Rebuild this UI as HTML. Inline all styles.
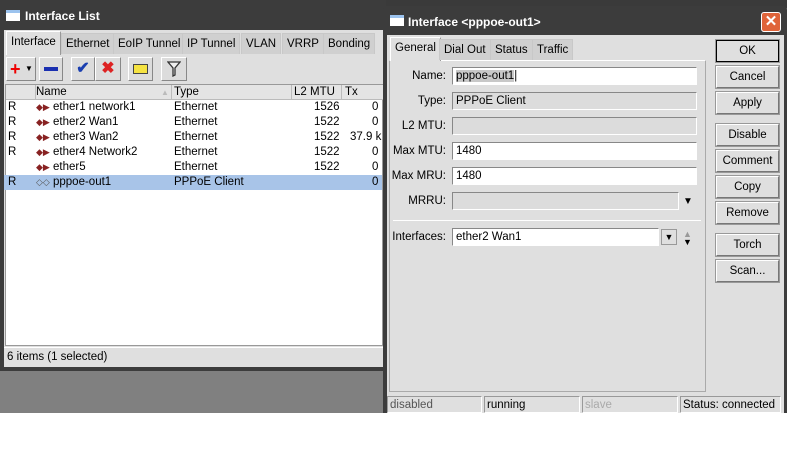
<!DOCTYPE html>
<html><head><style>
*{margin:0;padding:0;box-sizing:border-box}
body{width:787px;height:450px;background:#fff;position:relative;overflow:hidden;font-family:"Liberation Sans",sans-serif;font-size:11px;color:#000}
.a{position:absolute}
.bg{left:0;top:0;width:787px;height:413px;background:#808080}
.win{background:#3c3c3c}
.title{color:#fff;font-weight:bold;font-size:12px}
.ic{background:#fff;border-top:3px solid #9cc3ee;width:14px;height:11px}
.face{background:#dfdfdf}
.tab{top:0;height:21px;background:#d0d0d0;border:1px solid #c8c8c8;border-bottom:none;padding:4px 4px 0;font-size:11.5px;white-space:nowrap}
.tab.on{background:#dfdfdf;border-color:#fff #999 #dfdfdf #fff;top:-2px;height:24px}
.tb{width:30px;height:24px;border:1px solid;border-color:#fff #888 #888 #fff;background:#dcdcdc}
.row{left:4px;width:378px;height:15px;line-height:15px;font-size:11.5px}
.row span{position:absolute}
.fld{height:18px;border:1px solid;border-color:#888 #fff #fff #888;background:#fff;padding:2px 3px;font-size:11.5px}
.fld.g{background:#dcdcdc}
.lbl{width:60px;text-align:right;font-size:11.5px}
.btn{left:716px;width:63px;height:22px;border:1px solid;border-color:#fff #777 #777 #fff;outline:1px solid #999;text-align:center;line-height:20px;font-size:11.5px;background:#dfdfdf}
.st{top:396px;height:17px;border:1px solid;border-color:#999 #fff #fff #999;padding:2px;font-size:11.5px}
</style></head><body>
<div class="a bg"></div>
<div class="a" style="left:383px;top:0;width:404px;height:8px;background:#3a3a3a"></div>
<!-- left window -->
<div class="a win" style="left:0;top:0;width:386px;height:371px"></div>
<div class="a ic" style="left:6px;top:10px"></div>
<div class="a title" style="left:25px;top:9px">Interface List</div>
<div class="a face" style="left:4px;top:30px;width:379px;height:337px"></div>
<div class="a" style="left:4px;top:33px;width:379px;height:22px">
<div class="a tab on" style="left:2px">Interface</div>
<div class="a tab" style="left:57px">Ethernet</div>
<div class="a tab" style="left:109px">EoIP Tunnel</div>
<div class="a tab" style="left:178px">IP Tunnel</div>
<div class="a tab" style="left:237px">VLAN</div>
<div class="a tab" style="left:278px">VRRP</div>
<div class="a tab" style="left:319px">Bonding</div>
</div>
<div class="a tb" style="left:6px;top:57px"><span class="a" style="left:3px;top:0px;color:#e00;font-size:18px;font-weight:bold;line-height:22px">+</span><span class="a" style="left:18px;top:6px;font-size:8px">▼</span></div>
<div class="a tb" style="left:39px;top:57px;width:24px"><div class="a" style="left:4px;top:9px;width:14px;height:4px;background:#1a2fb0"></div></div>
<div class="a tb" style="left:71px;top:57px;width:24px;color:#1a3fb0;font-size:16px;font-weight:bold;text-align:center;line-height:22px">✔</div>
<div class="a tb" style="left:95px;top:57px;width:26px;color:#d22;font-size:16px;font-weight:bold;text-align:center;line-height:22px">✖</div>
<div class="a tb" style="left:128px;top:57px;width:25px"><div class="a" style="left:4px;top:6px;width:15px;height:10px;background:#f5e342;border:1px solid #444"></div></div>
<div class="a tb" style="left:161px;top:57px;width:26px"><svg class="a" style="left:5px;top:3px" width="14" height="16" viewBox="0 0 14 16"><path d="M1 1H13L8 7V14L6 15V7Z" fill="#eee" stroke="#333" stroke-width="1.3"/></svg></div>
<div class="a" style="left:5px;top:84px;width:378px;height:262px;background:#fff;border:1px solid #999"></div>
<div class="a" style="left:6px;top:85px;width:377px;height:15px;background:#e4e4e4;border-bottom:1px solid #bbb"></div>
<div class="a row" style="top:85px"><span style="left:32px">Name</span><span style="left:157px;color:#bbb;font-size:8px">▲</span><span style="left:170px">Type</span><span style="left:290px">L2 MTU</span><span style="left:341px">Tx</span></div>
<div class="a" style="left:35px;top:85px;width:1px;height:15px;background:#bbb"></div>
<div class="a" style="left:171px;top:85px;width:1px;height:15px;background:#bbb"></div>
<div class="a" style="left:291px;top:85px;width:1px;height:15px;background:#bbb"></div>
<div class="a" style="left:341px;top:85px;width:1px;height:15px;background:#bbb"></div>
<div class="a row" style="top:100px"><span style="left:4px">R</span><span style="left:32px;color:#822;font-size:9px">◆▶</span><span style="left:49px">ether1 network1</span><span style="left:170px">Ethernet</span><span style="left:310px">1526</span><span style="left:368px">0</span></div>
<div class="a row" style="top:115px"><span style="left:4px">R</span><span style="left:32px;color:#822;font-size:9px">◆▶</span><span style="left:49px">ether2 Wan1</span><span style="left:170px">Ethernet</span><span style="left:310px">1522</span><span style="left:368px">0</span></div>
<div class="a row" style="top:130px"><span style="left:4px">R</span><span style="left:32px;color:#822;font-size:9px">◆▶</span><span style="left:49px">ether3 Wan2</span><span style="left:170px">Ethernet</span><span style="left:310px">1522</span><span style="left:346px">37.9 k</span></div>
<div class="a row" style="top:145px"><span style="left:4px">R</span><span style="left:32px;color:#822;font-size:9px">◆▶</span><span style="left:49px">ether4 Network2</span><span style="left:170px">Ethernet</span><span style="left:310px">1522</span><span style="left:368px">0</span></div>
<div class="a row" style="top:160px"><span style="left:32px;color:#822;font-size:9px">◆▶</span><span style="left:49px">ether5</span><span style="left:170px">Ethernet</span><span style="left:310px">1522</span><span style="left:368px">0</span></div>
<div class="a row" style="top:175px;background:#a8c4e8"><span style="left:4px">R</span><span style="left:32px;color:#555;font-size:9px">◇◇</span><span style="left:49px">pppoe-out1</span><span style="left:170px">PPPoE Client</span><span style="left:368px">0</span></div>
<div class="a" style="left:4px;top:347px;width:379px;height:20px;border-top:1px solid #fff;padding:3px 3px;font-size:11.5px">6 items (1 selected)</div>
<!-- right window -->
<div class="a win" style="left:383px;top:6px;width:404px;height:407px;border-radius:4px 4px 0 0"></div>
<div class="a ic" style="left:390px;top:15px"></div>
<div class="a title" style="left:408px;top:15px">Interface &lt;pppoe-out1&gt;</div>
<div class="a" style="left:761px;top:12px;width:20px;height:20px;background:#e0643a;border:1px solid #fff;border-radius:3px;color:#fff;font-weight:bold;text-align:center;line-height:18px;font-size:15px">✕</div>
<div class="a face" style="left:387px;top:35px;width:397px;height:378px"></div>
<div class="a" style="left:389px;top:60px;width:317px;height:332px;border:1px solid #aaa;border-top-color:#fff"></div>
<div class="a" style="left:389px;top:39px;width:317px;height:22px">
<div class="a tab on" style="left:1px">General</div>
<div class="a tab" style="left:50px">Dial Out</div>
<div class="a tab" style="left:101px">Status</div>
<div class="a tab" style="left:143px">Traffic</div>
</div>
<div class="a lbl" style="left:386px;top:70px">Name:</div><div class="a fld" style="left:452px;top:67px;width:245px"><span style="background:#c8c8c8">pppoe-out1</span>|</div>
<div class="a lbl" style="left:386px;top:95px">Type:</div><div class="a fld g" style="left:452px;top:92px;width:245px">PPPoE Client</div>
<div class="a lbl" style="left:386px;top:120px">L2 MTU:</div><div class="a fld g" style="left:452px;top:117px;width:245px"></div>
<div class="a lbl" style="left:386px;top:145px">Max MTU:</div><div class="a fld" style="left:452px;top:142px;width:245px">1480</div>
<div class="a lbl" style="left:386px;top:170px">Max MRU:</div><div class="a fld" style="left:452px;top:167px;width:245px">1480</div>
<div class="a lbl" style="left:386px;top:195px">MRRU:</div><div class="a fld g" style="left:452px;top:192px;width:227px"></div>
<div class="a" style="left:683px;top:196px;font-size:10px">▼</div>
<div class="a" style="left:393px;top:220px;width:308px;height:1px;background:#bbb;border-bottom:1px solid #fff"></div>
<div class="a lbl" style="left:386px;top:231px">Interfaces:</div><div class="a fld" style="left:452px;top:228px;width:207px">ether2 Wan1</div>
<div class="a" style="left:661px;top:229px;width:16px;height:16px;border:1px solid #999;text-align:center;font-size:9px;line-height:14px">▼</div>
<div class="a" style="left:683px;top:230px;font-size:9px;line-height:8px;text-align:center"><span style="color:#999">▲</span><br>▼</div>
<div class="a btn" style="top:40px;border-color:#000">OK</div>
<div class="a btn" style="top:66px">Cancel</div>
<div class="a btn" style="top:92px">Apply</div>
<div class="a btn" style="top:124px">Disable</div>
<div class="a btn" style="top:150px">Comment</div>
<div class="a btn" style="top:176px">Copy</div>
<div class="a btn" style="top:202px">Remove</div>
<div class="a btn" style="top:234px">Torch</div>
<div class="a btn" style="top:260px">Scan...</div>
<div class="a st" style="left:387px;width:95px;color:#555">disabled</div>
<div class="a st" style="left:484px;width:96px">running</div>
<div class="a st" style="left:582px;width:96px;color:#aaa">slave</div>
<div class="a st" style="left:680px;width:101px">Status: connected</div>
</body></html>
